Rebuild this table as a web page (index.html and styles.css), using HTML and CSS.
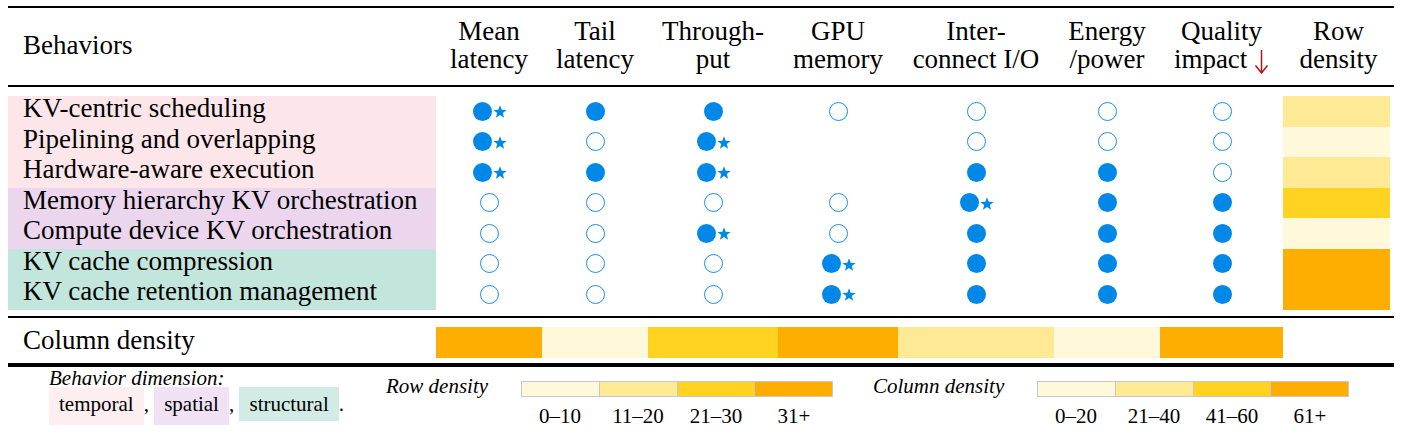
FILE: index.html
```html
<!DOCTYPE html>
<html>
<head>
<meta charset="utf-8">
<link rel="stylesheet" href="styles.css">
</head>
<body>
<div class="page">
  <div class="grid head">
    <div class="hcell first"><span>Behaviors</span></div>
    <div class="hcell"><span>Mean<br>latency</span></div>
    <div class="hcell"><span>Tail<br>latency</span></div>
    <div class="hcell"><span>Through-<br>put</span></div>
    <div class="hcell"><span>GPU<br>memory</span></div>
    <div class="hcell"><span>Inter-<br>connect I/O</span></div>
    <div class="hcell"><span>Energy<br>/power</span></div>
    <div class="hcell"><span>Quality<br>impact <svg class="arrow" width="15" height="25" viewBox="0 0 15 25"><path d="M7.5 1 V23.5 M1.5 16.5 L7.5 24 L13.5 16.5" fill="none" stroke="#b0171c" stroke-width="1.5"/></svg></span></div>
    <div class="hcell"><span>Row<br>density</span></div>
  </div>

  <div class="grid body">
    <div class="label temporal">KV-centric scheduling</div>
    <div class="cell"><i class="f"></i><svg class="st" viewBox="0 0 14 14"><polygon points="7,0.2 8.7,4.85 13.66,5.04 9.76,8.1 11.11,12.86 7,10.1 2.89,12.86 4.24,8.1 0.34,5.04 5.3,4.85"/></svg></div>
    <div class="cell"><i class="f"></i></div>
    <div class="cell"><i class="f"></i></div>
    <div class="cell"><i class="o"></i></div>
    <div class="cell"><i class="o"></i></div>
    <div class="cell"><i class="o"></i></div>
    <div class="cell"><i class="o"></i></div>
    <div class="rd"><div class="bar d2"></div></div>

    <div class="label temporal">Pipelining and overlapping</div>
    <div class="cell"><i class="f"></i><svg class="st" viewBox="0 0 14 14"><polygon points="7,0.2 8.7,4.85 13.66,5.04 9.76,8.1 11.11,12.86 7,10.1 2.89,12.86 4.24,8.1 0.34,5.04 5.3,4.85"/></svg></div>
    <div class="cell"><i class="o"></i></div>
    <div class="cell"><i class="f"></i><svg class="st" viewBox="0 0 14 14"><polygon points="7,0.2 8.7,4.85 13.66,5.04 9.76,8.1 11.11,12.86 7,10.1 2.89,12.86 4.24,8.1 0.34,5.04 5.3,4.85"/></svg></div>
    <div class="cell"></div>
    <div class="cell"><i class="o"></i></div>
    <div class="cell"><i class="o"></i></div>
    <div class="cell"><i class="o"></i></div>
    <div class="rd"><div class="bar d1"></div></div>

    <div class="label temporal">Hardware-aware execution</div>
    <div class="cell"><i class="f"></i><svg class="st" viewBox="0 0 14 14"><polygon points="7,0.2 8.7,4.85 13.66,5.04 9.76,8.1 11.11,12.86 7,10.1 2.89,12.86 4.24,8.1 0.34,5.04 5.3,4.85"/></svg></div>
    <div class="cell"><i class="f"></i></div>
    <div class="cell"><i class="f"></i><svg class="st" viewBox="0 0 14 14"><polygon points="7,0.2 8.7,4.85 13.66,5.04 9.76,8.1 11.11,12.86 7,10.1 2.89,12.86 4.24,8.1 0.34,5.04 5.3,4.85"/></svg></div>
    <div class="cell"></div>
    <div class="cell"><i class="f"></i></div>
    <div class="cell"><i class="f"></i></div>
    <div class="cell"><i class="o"></i></div>
    <div class="rd"><div class="bar d2"></div></div>

    <div class="label spatial">Memory hierarchy KV orchestration</div>
    <div class="cell"><i class="o"></i></div>
    <div class="cell"><i class="o"></i></div>
    <div class="cell"><i class="o"></i></div>
    <div class="cell"><i class="o"></i></div>
    <div class="cell"><i class="f"></i><svg class="st" viewBox="0 0 14 14"><polygon points="7,0.2 8.7,4.85 13.66,5.04 9.76,8.1 11.11,12.86 7,10.1 2.89,12.86 4.24,8.1 0.34,5.04 5.3,4.85"/></svg></div>
    <div class="cell"><i class="f"></i></div>
    <div class="cell"><i class="f"></i></div>
    <div class="rd"><div class="bar d3"></div></div>

    <div class="label spatial">Compute device KV orchestration</div>
    <div class="cell"><i class="o"></i></div>
    <div class="cell"><i class="o"></i></div>
    <div class="cell"><i class="f"></i><svg class="st" viewBox="0 0 14 14"><polygon points="7,0.2 8.7,4.85 13.66,5.04 9.76,8.1 11.11,12.86 7,10.1 2.89,12.86 4.24,8.1 0.34,5.04 5.3,4.85"/></svg></div>
    <div class="cell"><i class="o"></i></div>
    <div class="cell"><i class="f"></i></div>
    <div class="cell"><i class="f"></i></div>
    <div class="cell"><i class="f"></i></div>
    <div class="rd"><div class="bar d1"></div></div>

    <div class="label structural">KV cache compression</div>
    <div class="cell"><i class="o"></i></div>
    <div class="cell"><i class="o"></i></div>
    <div class="cell"><i class="o"></i></div>
    <div class="cell"><i class="f"></i><svg class="st" viewBox="0 0 14 14"><polygon points="7,0.2 8.7,4.85 13.66,5.04 9.76,8.1 11.11,12.86 7,10.1 2.89,12.86 4.24,8.1 0.34,5.04 5.3,4.85"/></svg></div>
    <div class="cell"><i class="f"></i></div>
    <div class="cell"><i class="f"></i></div>
    <div class="cell"><i class="f"></i></div>
    <div class="rd"><div class="bar d4"></div></div>

    <div class="label structural">KV cache retention management</div>
    <div class="cell"><i class="o"></i></div>
    <div class="cell"><i class="o"></i></div>
    <div class="cell"><i class="o"></i></div>
    <div class="cell"><i class="f"></i><svg class="st" viewBox="0 0 14 14"><polygon points="7,0.2 8.7,4.85 13.66,5.04 9.76,8.1 11.11,12.86 7,10.1 2.89,12.86 4.24,8.1 0.34,5.04 5.3,4.85"/></svg></div>
    <div class="cell"><i class="f"></i></div>
    <div class="cell"><i class="f"></i></div>
    <div class="cell"><i class="f"></i></div>
    <div class="rd"><div class="bar d4"></div></div>
  </div>

  <div class="grid coldens">
    <div class="cdlabel">Column density</div>
    <div class="cdbar d4"></div>
    <div class="cdbar d1"></div>
    <div class="cdbar d3"></div>
    <div class="cdbar d4"></div>
    <div class="cdbar d2"></div>
    <div class="cdbar d1"></div>
    <div class="cdbar d4"></div>
    <div></div>
  </div>

  <div class="legend">
    <div class="dim">
      <div class="dimtitle">Behavior dimension:</div>
      <div class="chips"><span class="chip c-temporal">temporal</span>, <span class="chip c-spatial">spatial</span>, <span class="chip c-structural">structural</span>.</div>
    </div>
    <div class="lgname rowname">Row density</div>
    <div class="scalebox">
      <div class="scale"><span class="d1"></span><span class="d2"></span><span class="d3"></span><span class="d4"></span></div>
      <div class="ticks"><span>0–10</span><span>11–20</span><span>21–30</span><span>31+</span></div>
    </div>
    <div class="lgname colname">Column density</div>
    <div class="scalebox">
      <div class="scale"><span class="d1"></span><span class="d2"></span><span class="d3"></span><span class="d4"></span></div>
      <div class="ticks"><span>0–20</span><span>21–40</span><span>41–60</span><span>61+</span></div>
    </div>
  </div>
</div>
</body>
</html>
```

FILE: styles.css
```css
html, body {
  margin: 0;
  padding: 0;
  background: #ffffff;
}
body {
  font-family: "Liberation Serif", "Times New Roman", serif;
  color: #000000;
}
.page {
  padding: 6px 0 0 8px;
  width: 1386px;
}
.grid {
  display: grid;
  grid-template-columns: 428px 106px 106px 130px 120px 156px 106px 123px 111px;
}

/* header */
.head {
  border-top: 2px solid #000;
  border-bottom: 2px solid #000;
  height: 77px;
  box-sizing: content-box;
}
.hcell {
  font-size: 27px;
  line-height: 28px;
  text-align: center;
  display: flex;
  align-items: center;
  justify-content: center;
  padding-bottom: 3px;
  white-space: nowrap;
}
.hcell.first {
  justify-content: flex-start;
  padding-left: 15px;
}
.arrow {
  vertical-align: -6px;
}

/* body rows */
.body {
  grid-auto-rows: 30.5px;
  padding: 9px 0 6.5px;
}
.label {
  font-size: 27px;
  line-height: 24.5px;
  padding-left: 15px;
  white-space: nowrap;
}
.temporal { background: #fde6e9; }
.spatial { background: #ecd6ee; }
.structural { background: #c2e5dc; }
.cell {
  display: flex;
  align-items: center;
  justify-content: center;
  padding-left: 1px;
}
.f, .o {
  display: block;
  width: 19px;
  height: 19px;
  border-radius: 50%;
  box-sizing: border-box;
  flex: none;
}
.f { background: #0088e8; }
.o { border: 1.5px solid #1a90e8; }
.st {
  display: block;
  flex: none;
  width: 14px;
  height: 14px;
  margin-left: 1px;
  margin-top: 2px;
  fill: #0088e8;
}
.rd {
  padding-right: 4px;
}
.bar {
  height: 100%;
}
.d1 { background: #fff8da; }
.d2 { background: #feea95; }
.d3 { background: #ffd320; }
.d4 { background: #fdae00; }

/* column density */
.coldens {
  border-top: 2px solid #000;
  border-bottom: 4px solid #000;
  height: 45px;
  box-sizing: content-box;
}
.cdlabel {
  font-size: 27px;
  line-height: 26px;
  padding: 9px 0 0 15px;
}
.cdbar {
  margin: 9px 0 5px;
}

/* legend */
.legend {
  display: flex;
  align-items: flex-start;
  padding-left: 41px;
  font-size: 21px;
}
.dim {
  width: 337px;
}
.dimtitle {
  font-style: italic;
  line-height: 17px;
  padding-top: 3px;
}
.chips {
  line-height: 20px;
  white-space: nowrap;
}
.chip {
  display: inline-block;
  line-height: 34px;
  padding: 0 10px 4px;
  vertical-align: baseline;
}
.c-temporal { background: #fdeef0; }
.c-spatial { background: #f0e2f4; }
.c-structural { background: #d2ece5; padding-bottom: 0; }
.lgname {
  font-style: italic;
  line-height: 20px;
  padding-top: 9px;
  white-space: nowrap;
}
.rowname { width: 135px; }
.colname { width: 164px; margin-left: 40px; }
.scalebox {
  width: 312px;
  padding-top: 14px;
}
.scale {
  display: flex;
  height: 16px;
  border: 1px solid #c8c8c8;
  box-sizing: border-box;
}
.scale span {
  flex: 1;
}
.scale span + span {
  border-left: 1px solid #c8c8c8;
}
.ticks {
  display: flex;
  margin-top: 9px;
  line-height: 20px;
}
.ticks span {
  flex: 1;
  text-align: center;
}
```
